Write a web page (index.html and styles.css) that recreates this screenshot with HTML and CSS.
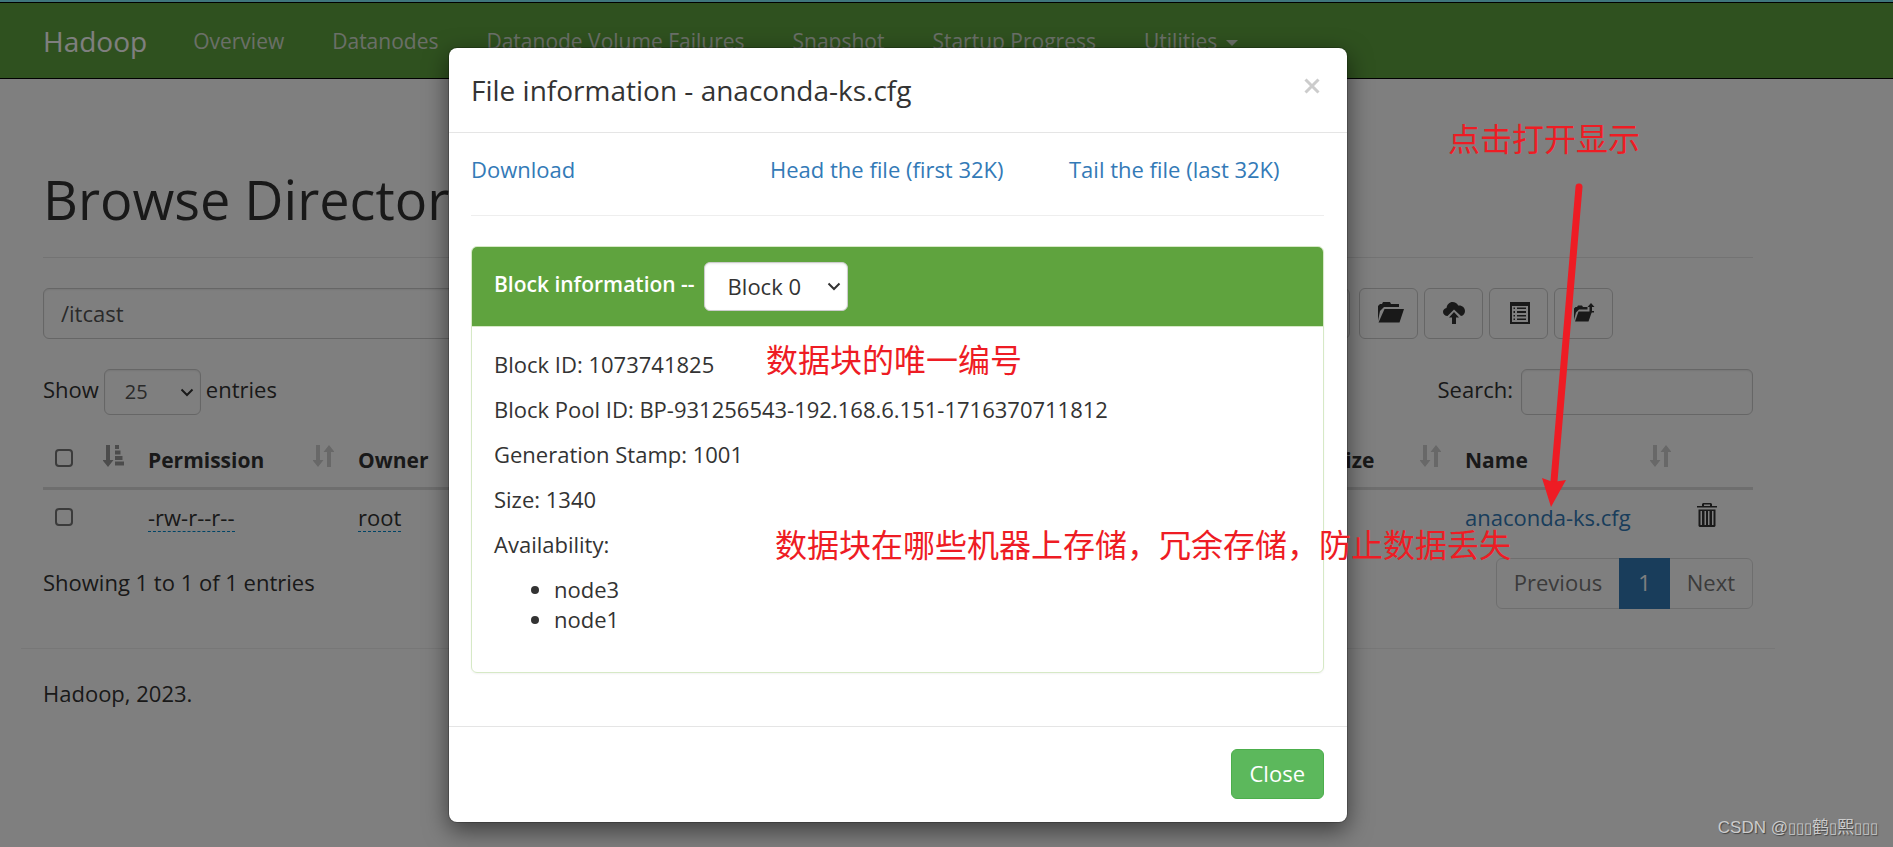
FILE: index.html
```html
<!DOCTYPE html>
<html lang="en">
<head>
<meta charset="utf-8">
<title>Browsing HDFS</title>
<link rel="stylesheet" href="styles.css">
</head>
<body>
<svg class="defs" aria-hidden="true">
  <symbol id="i-sort" viewBox="0 0 21 22"><path d="M3 0h4v15h3.500L5 22-.5 15H3zM14 22h4V7h3.500L16 0l-5.500 7H14z"/></symbol>
  <symbol id="i-sorted" viewBox="0 0 21 22"><path d="M3 0h4v15h3.500L5 22-.5 15H3zM12 0h4v4h-4zM12 5.500h5.500v4H12zM12 11h7.500v4H12zM12 16.500h9v4h-9z"/></symbol>
</svg>

<header class="navbar">
  <a class="brand" href="#">Hadoop</a>
  <nav class="nav">
    <a href="#">Overview</a>
    <a href="#">Datanodes</a>
    <a href="#">Datanode Volume Failures</a>
    <a href="#">Snapshot</a>
    <a href="#">Startup Progress</a>
    <a href="#">Utilities <span class="caret"></span></a>
  </nav>
</header>

<main class="container">
  <h1 class="page-header">Browse Directory</h1>

  <div class="path-row">
    <input class="field path" type="text" value="/itcast" aria-label="Directory">
    <div class="tools">
      <button class="tool" type="button" aria-label="Create directory">
        <svg width="31" height="21" viewBox="-4 0 31 21"><path d="M1 19V4l2-2h2l1-2h7l1 2h8v3H7L3 9z"/><path d="M7.500 7H27l-4.500 13.500H1.500z"/></svg>
      </button>
      <button class="tool" type="button" aria-label="Upload files">
        <svg width="22" height="22" viewBox="0 0 22 22"><path d="M4.500 14C2 14 0 12.300 0 10c0-2 1.300-3.500 3.500-4C4 2.500 6.500 0 9.500 0c2.600 0 4.700 1.500 5.700 3.500C19 3 22 5.500 22 9c0 2.500-1.500 4.600-4 5L11 7.500z"/><path d="M11 10l5 5.500h-3V22H9v-6.500H6z"/></svg>
      </button>
      <button class="tool" type="button" aria-label="Cut and paste">
        <svg width="23" height="22" viewBox="-3 0 23 22"><path fill-rule="evenodd" d="M0 0h20v22H0zM2 4V20h16V4z"/><path d="M3.500 5.500H5V7H3.500zM7 5.500h9V7H7zM3.500 9H5v2H3.500zM7 9h9v2H7zM3.500 13H5v1.500H3.500zM7 13h9v1.500H7zM3.500 16.500H5V18H3.500zM7 16.500h9V18H7z"/></svg>
      </button>
      <button class="tool" type="button" aria-label="Parent directory">
        <svg width="22" height="19" viewBox="0 0 22 19"><path d="M1 17V5.500L2.500 4H4l1-1.500h4l1 1.500h4.500v2.500H6L3 9.500z"/><path d="M5.500 8.500H19L15.500 18.500H2z"/><path d="M18 0l3.500 4H19v4h2v1.500h-4.500V4h-2z"/></svg>
      </button>
    </div>
  </div>

  <div class="filter-row">
    <label class="inline"><span>Show</span>
      <select class="field length"><option>25</option></select>
      <span>entries</span></label>
    <label class="inline"><span>Search:</span> <input class="field search" type="search"></label>
  </div>

  <table class="files">
    <thead>
      <tr>
        <th class="c-check"><div class="head"><input type="checkbox" aria-label="Select all"><svg class="sort on"><use href="#i-sorted"/></svg></div></th>
        <th class="c-perm"><div class="head">Permission<svg class="sort"><use href="#i-sort"/></svg></div></th>
        <th>Owner</th>
        <th class="c-block"><div class="head">Block Size<svg class="sort"><use href="#i-sort"/></svg></div></th>
        <th class="c-name"><div class="head">Name<svg class="sort"><use href="#i-sort"/></svg></div></th>
        <th class="c-trash"></th>
      </tr>
    </thead>
    <tbody>
      <tr>
        <td><div class="head"><input type="checkbox" aria-label="Select anaconda-ks.cfg"></div></td>
        <td><span class="editable">-rw-r--r--</span></td>
        <td><span class="editable">root</span></td>
        <td></td>
        <td><a class="link" href="#">anaconda-ks.cfg</a></td>
        <td><button class="trash" type="button" aria-label="Delete"><svg width="20" height="24" viewBox="0 0 20 24"><path fill-rule="evenodd" d="M6 0h8l1 1v2h5v1.500H0V3h5V1zM7 1.500V3h6V1.500zM1.500 6.500h17V23l-1 1h-15l-1-1zM3.500 8v14H5V8zM7.500 8v14H9V8zM11 8v14h1.500V8zM15 8v14h1.500V8z"/></svg></button></td>
      </tr>
    </tbody>
  </table>

  <div class="table-foot">
    <span class="info">Showing 1 to 1 of 1 entries</span>
    <nav class="pages" aria-label="Pages">
      <a href="#">Previous</a><a class="current" href="#">1</a><a href="#">Next</a>
    </nav>
  </div>

  <footer class="footer">Hadoop, 2023.</footer>
</main>

<div class="backdrop">
  <section class="modal" role="dialog" aria-labelledby="dialog-title">
    <header class="modal-header">
      <h4 id="dialog-title">File information - anaconda-ks.cfg</h4>
      <button class="dismiss" type="button" aria-label="Dismiss"><svg width="16" height="16" viewBox="0 0 16 16"><path d="M1.500 1.500l13 13M14.500 1.500l-13 13"/></svg></button>
    </header>
    <div class="modal-body">
      <div class="actions">
        <a class="link" href="#">Download</a>
        <a class="link" href="#">Head the file (first 32K)</a>
        <a class="link" href="#">Tail the file (last 32K)</a>
      </div>
      <div class="panel">
        <div class="panel-heading">
          <label for="block">Block information --</label>
          <select class="field block" id="block"><option>Block 0</option></select>
        </div>
        <div class="panel-body">
          <p>Block ID: 1073741825</p>
          <p>Block Pool ID: BP-931256543-192.168.6.151-1716370711812</p>
          <p>Generation Stamp: 1001</p>
          <p>Size: 1340</p>
          <p>Availability:</p>
          <ul><li>node3</li><li>node1</li></ul>
        </div>
      </div>
    </div>
    <footer class="modal-footer"><button class="close" type="button">Close</button></footer>
  </section>
</div>

<div class="notes">
  <span class="note n-open">点击打开显示</span>
  <span class="note n-id">数据块的唯一编号</span>
  <span class="note n-nodes">数据块在哪些机器上存储，冗余存储，防止数据丢失</span>
  <svg class="arrow" width="44" height="326" viewBox="0 0 44 326"><path class="shaft" d="M37 6L12 300"/><path d="M9 326L0 297l11 4 13-2z"/></svg>
  <span class="mark">CSDN @<span class="box">▯▯▯</span>鹤<span class="box">▯</span>熙<span class="box">▯▯▯</span></span>
</div>
</body>
</html>
```
FILE: styles.css
```css
* { box-sizing: border-box; }
body {
  margin: 0;
  position: relative;
  min-height: 100vh;
  overflow: hidden;
  background: #fff;
  color: #333;
  font: 22px/30px "Open Sans", "Noto Sans", "Noto Sans CJK SC", sans-serif;
}
a { text-decoration: none; }
input, select, button { font: inherit; color: inherit; margin: 0; }
svg { display: block; fill: currentColor; }
.defs { position: absolute; width: 0; height: 0; }
.link { color: #337ab7; }

.navbar {
  display: flex;
  align-items: center;
  gap: 46px;
  height: 79px;
  padding: 0 43px;
  background: #5fa33e;
  border-top: 3px solid #000;
  border-bottom: 1px solid #000;
}
.brand { color: #fff; font-size: 28px; }
.nav { display: flex; gap: 48px; font-size: 21px; }
.nav a { color: #d5dfd0; white-space: nowrap; }
.caret {
  display: inline-block;
  margin-left: 3px;
  vertical-align: middle;
  border: 6px solid transparent;
  border-top-color: currentColor;
  border-bottom: 0;
}

.container { padding: 91px 140px 0 43px; }
.page-header {
  margin: 0 0 30px;
  padding-bottom: 28px;
  border-bottom: 1px solid #e6e6e6;
  font-size: 54px;
  line-height: 59px;
  font-weight: 400;
}
.field {
  background: #fff;
  border: 1px solid #ccc;
  border-radius: 6px;
  box-shadow: inset 0 1px 2px rgba(0, 0, 0, .08);
  color: #555;
}
select.field {
  appearance: none;
  background: #fff url("data:image/svg+xml,%3Csvg xmlns='http://www.w3.org/2000/svg' width='14' height='9' viewBox='0 0 14 9'%3E%3Cpath d='M1.500 1.500L7 7l5.500-5.500' fill='none' stroke='%23333' stroke-width='2'/%3E%3C/svg%3E") no-repeat right 6px center;
}
.path-row { display: flex; gap: 9px; padding-right: 140px; }
.path { flex: 1; min-width: 0; height: 51px; padding: 0 17px 2px; }
.tools { display: flex; gap: 6px; }
.tool {
  display: grid;
  place-items: center;
  width: 59px;
  height: 51px;
  padding: 0 0 2px;
  background: #fff;
  border: 1px solid #ccc;
  border-radius: 6px;
}

.filter-row { display: flex; justify-content: space-between; margin: 30px 0 18px; height: 46px; }
.inline { display: flex; align-items: center; gap: 5px; }
.inline span { padding-bottom: 7px; }
.inline .field { height: 46px; }
.length { width: 97px; padding: 0 0 0 20px; font-size: 20px; }
.search { width: 232px; margin-left: 3px; padding: 0 12px; }

.files { width: 100%; table-layout: fixed; border-collapse: separate; border-spacing: 0; }
.files th, .files td { padding: 12px; text-align: left; height: 54px; }
.files th { border-bottom: 3px solid #ddd; height: 57px; font-size: 21px; }
.c-check { width: 93px; }
.c-perm { width: 210px; }
.c-block { width: 194px; }
.c-name { width: 230px; }
.c-trash { width: 70px; }
.head { display: flex; align-items: center; justify-content: space-between; height: 30px; }
.head input { appearance: none; width: 18px; height: 18px; background: #fff; border: 2px solid #767676; border-radius: 4px; }
th .head input { margin-bottom: 4px; }
.sort { width: 21px; height: 22px; align-self: flex-start; overflow: visible; color: #d0d0d0; }
.sort.on { color: #999; }
.editable { border-bottom: 1px dashed #08c; display: inline-block; line-height: 28px; }
.trash { display: block; padding: 0 2px 5px; background: none; border: 0; }

.table-foot { display: flex; align-items: center; justify-content: space-between; margin-top: 14px; }
.info { padding-bottom: 4px; }
.pages { display: flex; height: 51px; border: 1px solid #ddd; border-radius: 6px; }
.pages a { padding: 8px 17px; color: #777; }
.pages .current { margin: -1px 0; padding: 9px 19px; background: #337ab7; color: #fff; }
.footer { margin: 39px -22px 0; padding: 29px 22px; border-top: 1px solid #eee; }

.backdrop {
  position: absolute;
  inset: 2px 0 0;
  padding: 45px 97px 24px 0;
  display: flex;
  justify-content: center;
  align-items: flex-start;
  background: rgba(0, 0, 0, .5);
}
body::before { content: ""; position: absolute; inset: 0 0 auto; height: 2px; background: #3f767c; }
.modal {
  width: 900px;
  max-width: 100%;
  background: #fff;
  background-clip: padding-box;
  border: 1px solid rgba(0, 0, 0, .2);
  border-radius: 9px;
  box-shadow: 0 8px 23px rgba(0, 0, 0, .5);
}
.modal-header { display: flex; justify-content: space-between; padding: 22px 23px 22px 22px; border-bottom: 1px solid #e5e5e5; }
.modal-header h4 { margin: 0; font-size: 28px; line-height: 40px; font-weight: 400; }
.dismiss { align-self: flex-start; padding: 8px 4px; background: none; border: 0; color: #ccc; }
.dismiss path { stroke: currentColor; stroke-width: 3; }
.modal-body { padding: 21px 23px 53px 22px; }
.actions { display: grid; grid-template-columns: 299px 299px 1fr; padding-bottom: 31px; border-bottom: 1px solid #eee; }
.panel { margin-top: 30px; border: 1px solid #d6e9c6; border-radius: 6px; box-shadow: 0 1px 2px rgba(0, 0, 0, .05); }
.panel-heading {
  display: flex;
  gap: 9px;
  padding: 15px 22px;
  background: #5fa33e;
  border-bottom: 1px solid #d6e9c6;
  border-radius: 5px 5px 0 0;
  color: #fff;
}
.panel-heading label { font-weight: 600; font-size: 21px; line-height: 44px; }
.block { width: 144px; height: 49px; padding: 0 0 2px 23px; color: #333; }
.panel-body { padding: 22px; }
.panel-body p { margin: 0 0 15px; }
.panel-body ul { margin: 0 0 16px; padding-left: 60px; }
.modal-footer { display: flex; justify-content: flex-end; padding: 22px 23px 22px 22px; border-top: 1px solid #e5e5e5; }
.close { height: 50px; margin-bottom: 1px; padding: 0 18px 2px; background: #5cb85c; border: 1px solid #4cae4c; border-radius: 6px; color: #fff; }

/* Callouts drawn over the page */
.notes { position: absolute; inset: 0; pointer-events: none; }
.note { position: absolute; color: #ee1c24; font: 32px/40px "Noto Sans CJK SC", sans-serif; white-space: nowrap; }
.n-open { left: 1448px; top: 117px; }
.n-id { left: 766px; top: 338px; }
.n-nodes { left: 775px; top: 523px; }
.arrow { position: absolute; left: 1542px; top: 181px; fill: #ee1c24; }
.shaft { stroke: #ee1c24; stroke-width: 7; stroke-linecap: round; }
.mark { position: absolute; right: 15px; bottom: 7px; color: #ccc; font: 17px/24px "Liberation Sans", "Noto Sans CJK SC", sans-serif; text-shadow: 1px 1px 1px #444; }
.box { font-size: 15px; }
```
